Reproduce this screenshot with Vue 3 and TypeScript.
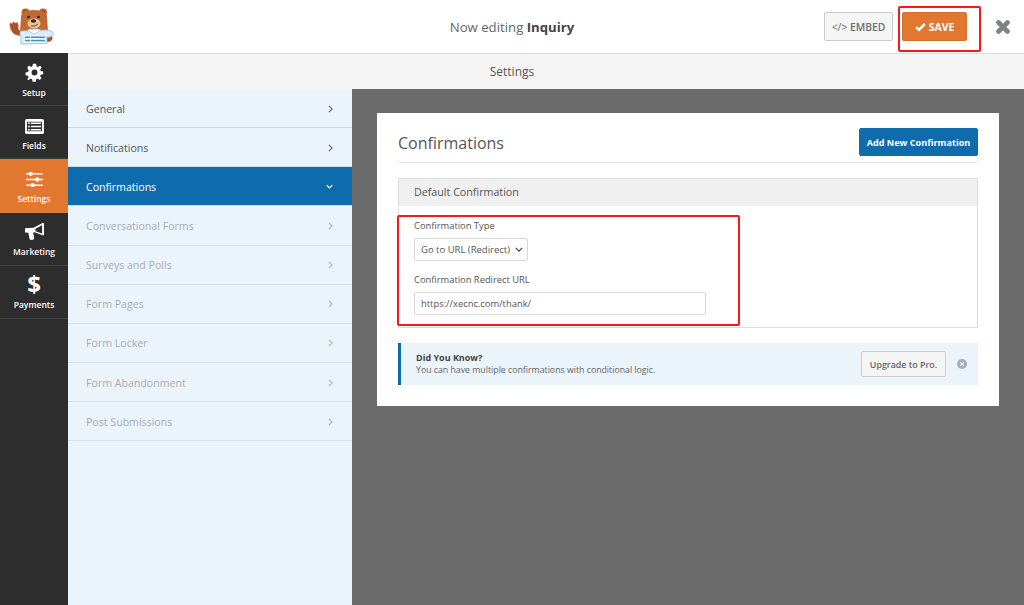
<script setup lang="ts">
const navItems = [
  { label: 'Setup', icon: 'gear', active: false },
  { label: 'Fields', icon: 'fields', active: false },
  { label: 'Settings', icon: 'sliders', active: true },
  { label: 'Marketing', icon: 'megaphone', active: false },
  { label: 'Payments', icon: 'dollar', active: false },
]
const menu = [
  { label: 'General', state: 'normal' },
  { label: 'Notifications', state: 'normal' },
  { label: 'Confirmations', state: 'active' },
  { label: 'Conversational Forms', state: 'muted' },
  { label: 'Surveys and Polls', state: 'muted' },
  { label: 'Form Pages', state: 'muted' },
  { label: 'Form Locker', state: 'muted' },
  { label: 'Form Abandonment', state: 'muted' },
  { label: 'Post Submissions', state: 'muted' },
]
</script>

<template>
  <div class="app">
    <header class="topbar">
      <svg class="logo" viewBox="0 0 60 50" width="60" height="50">
        <circle cx="25.500" cy="12.500" r="4" fill="#b5622f" />
        <circle cx="43" cy="12.500" r="4" fill="#b5622f" />
        <circle cx="25.500" cy="12.500" r="2" fill="#8a4522" />
        <circle cx="43" cy="12.500" r="2" fill="#8a4522" />
        <path d="M47 32 Q52 33 52.500 38 Q52 42 47 42Z" fill="#a8542a" />
        <path d="M9.500 25 L10 22.500 L12 23.500 L13.500 21.500 L15 23 L17.500 22 L18.500 25 L18.500 29 L22 33 L20 36 L14.500 34.500 Q10 31 9.500 25Z" fill="#a8512a" stroke="#f0c9a5" stroke-width="0.500" />
        <path d="M21 17 Q21 10 34 10 Q47 10 47 17 L48 31 L20 31Z" fill="#c06a33" />
        <ellipse cx="34" cy="23.500" rx="6.500" ry="5" fill="#ecc49c" />
        <ellipse cx="33.500" cy="21" rx="2.800" ry="1.800" fill="#3b2416" />
        <circle cx="28.500" cy="17" r="1.300" fill="#2b1a10" />
        <circle cx="38.500" cy="17" r="1.300" fill="#2b1a10" />
        <path d="M31 26 Q35 27 38 24" stroke="#5b3218" stroke-width="0.900" fill="none" />
        <path d="M20.500 31 L47 30 Q53 31 53.500 33 Q52 38 47 37 L47 43.500 L21 44 L21 37 Q19 33 20.500 31Z" fill="#dcedf9" stroke="#8dbbdc" stroke-width="0.800" />
        <path d="M27 30.500 L34 34 L41 30.500 L38 29 L30 29Z" fill="#ffffff" stroke="#8dbbdc" stroke-width="0.600" />
        <rect x="24" y="35.500" width="22" height="7" fill="#f4f9fd" />
        <rect x="25" y="36.500" width="5" height="1.500" fill="#3d8fd0" />
        <rect x="31" y="36.500" width="14" height="1.500" fill="#3d8fd0" />
        <rect x="25" y="39.800" width="5" height="1.500" fill="#3d8fd0" />
        <rect x="31" y="39.800" width="14" height="1.500" fill="#3d8fd0" />
      </svg>
      <div class="title">Now editing <strong>Inquiry</strong></div>
      <div class="actions">
        <button class="embed" type="button"><span class="code">&lt;/&gt;</span> EMBED</button>
        <button class="save" type="button">
          <svg viewBox="0 0 14 12" width="11" height="10"><path d="M1.500 6.200 L5 9.600 L12.500 2.200" fill="none" stroke="#fff" stroke-width="3.200" /></svg>
          SAVE
        </button>
        <svg class="close" viewBox="0 0 14 14" width="14" height="14"><path d="M2.500 2.500 L11.500 11.500 M11.500 2.500 L2.500 11.500" stroke="#7d8285" stroke-width="4.600" stroke-linecap="round" /></svg>
      </div>
    </header>

    <div class="body">
      <nav class="rail">
        <div v-for="item in navItems" :key="item.label" class="rail-item" :class="{ active: item.active }">
          <svg v-if="item.icon === 'gear'" viewBox="0 0 24 24" width="19" height="19">
            <path fill="#fff" fill-rule="evenodd" d="M10 1h4l.6 3.100 1.800.8L19 3.100 21 5.900l-1.900 2.400.7 1.800 3.200.6v3.400l-3.200.7-.7 1.800 1.900 2.500-2.400 2.400-2.600-1.800-1.800.7-.6 3.200h-4l-.6-3.200-1.800-.7-2.600 1.800L2.700 20.400l1.900-2.500-.7-1.800-3.200-.7v-3.400l3.200-.6.7-1.800L2.900 5.900 5 3.100l2.600 1.800 1.800-.8zM12 8.300a3.700 3.700 0 1 0 0 7.400 3.700 3.700 0 0 0 0-7.400z" />
          </svg>
          <svg v-else-if="item.icon === 'fields'" viewBox="0 0 22 18" width="21" height="17">
            <rect x="1" y="1" width="20" height="16" rx="2" fill="#fff" />
            <rect x="3" y="4" width="16" height="10" fill="#2d2d2d" />
            <path d="M4 5.500h2M7 5.500h11M4 9h2M7 9h11M4 12.500h2M7 12.500h11" stroke="#fff" stroke-width="1.600" />
          </svg>
          <svg v-else-if="item.icon === 'sliders'" viewBox="0 0 20 18" width="19" height="17">
            <path d="M1 3h18M1 9h18M1 15h18" stroke="#fff" stroke-width="1.500" />
            <rect x="4" y="1" width="4" height="4" rx="1" fill="#fff" />
            <rect x="11" y="7" width="4" height="4" rx="1" fill="#fff" />
            <rect x="6" y="13" width="4" height="4" rx="1" fill="#fff" />
          </svg>
          <svg v-else-if="item.icon === 'megaphone'" viewBox="0 0 22 20" width="21" height="19">
            <path fill="#fff" fill-rule="evenodd" d="M1 6.500 L10 6 L19.500 1 L21 1 L21 14 L19.500 14 L11 10.800 L9.500 11 L10.800 17 L10 18.500 L7 19 L5.800 18 L4.500 11.200 L1 11 Z M12 7 L12 9.700 L19 12 L19 3.500 Z" />
          </svg>
          <span v-else class="dollar">$</span>
          <span class="rail-label">{{ item.label }}</span>
        </div>
      </nav>

      <div class="main">
        <div class="subbar">Settings</div>
        <div class="columns">
          <aside class="menu">
            <div
              v-for="entry in menu"
              :key="entry.label"
              class="menu-item"
              :class="entry.state"
            >
              <span>{{ entry.label }}</span>
              <svg v-if="entry.state === 'active'" viewBox="0 0 10 6" width="7" height="5"><path d="M1 1 L5 5 L9 1" fill="none" stroke="#fff" stroke-width="1.600" /></svg>
              <svg v-else viewBox="0 0 6 10" width="5" height="8"><path d="M1 1 L5 5 L1 9" fill="none" stroke="currentColor" stroke-width="1.300" /></svg>
            </div>
          </aside>

          <section class="canvas">
            <div class="card">
              <div class="card-head">
                <h2>Confirmations</h2>
                <button class="add" type="button">Add New Confirmation</button>
              </div>
              <div class="panel">
                <div class="panel-head">Default Confirmation</div>
                <div class="panel-body">
                  <label class="lbl">Confirmation Type</label>
                  <div class="select">
                    <span>Go to URL (Redirect)</span>
                    <svg viewBox="0 0 10 6" width="8" height="5"><path d="M1 1 L5 5 L9 1" fill="none" stroke="#444" stroke-width="1.500" /></svg>
                  </div>
                  <label class="lbl second">Confirmation Redirect URL</label>
                  <div class="input">https://xecnc.com/thank/</div>
                </div>
              </div>
              <div class="notice">
                <div class="notice-text">
                  <strong>Did You Know?</strong>
                  <span>You can have multiple confirmations with conditional logic.</span>
                </div>
                <button class="upgrade" type="button">Upgrade to Pro.</button>
                <svg class="dismiss" viewBox="0 0 12 12" width="10" height="10">
                  <circle cx="6" cy="6" r="6" fill="#a6acb2" />
                  <path d="M3.800 3.800 L8.200 8.200 M8.200 3.800 L3.800 8.200" stroke="#ebf3fb" stroke-width="1.500" />
                </svg>
              </div>
            </div>
          </section>
        </div>
      </div>
    </div>

    <div class="mark mark-save"></div>
    <div class="mark mark-form"></div>
  </div>
</template>

<style>
html, body { margin: 0; padding: 0; }
</style>

<style scoped>
.app {
  position: relative;
  width: 1024px;
  height: 605px;
  overflow: hidden;
  display: flex;
  flex-direction: column;
  font-family: "Open Sans", "Liberation Sans", sans-serif;
  color: #444;
  background: #fff;
}
.topbar {
  position: relative;
  height: 54px;
  box-sizing: border-box;
  flex: none;
  border-bottom: 1px solid #ddd;
  display: flex;
  align-items: center;
  justify-content: center;
  background: #fff;
}
.logo { position: absolute; left: 0; top: 0; }
.title { font-size: 13.200px; color: #666; }
.title strong { font-weight: 700; color: #444; }
.actions {
  position: absolute;
  right: 14px;
  top: 12px;
  display: flex;
  align-items: center;
}
.embed {
  width: 69px;
  height: 29px;
  margin-right: 9px;
  padding: 0;
  border: 1px solid #ccc;
  border-radius: 2px;
  background: #f5f5f5;
  color: #6a6f73;
  font: 600 10.300px "Open Sans", sans-serif;
}
.embed .code { font-weight: 400; }
.save {
  width: 65px;
  height: 29px;
  margin-right: 29px;
  padding: 0;
  border: 1px solid #d0702a;
  border-radius: 2px;
  background: #e27730;
  color: #fff;
  font: 700 10.500px "Open Sans", sans-serif;
  display: flex;
  align-items: center;
  justify-content: center;
  gap: 3px;
}
.close { display: block; }
.body { flex: 1; display: flex; min-height: 0; }
.rail { width: 68px; flex: none; background: #2d2d2d; margin-top: -1px; position: relative; }
.rail-item {
  height: 53.200px;
  box-sizing: border-box;
  border-bottom: 1px solid #3f3f3f;
  display: flex;
  flex-direction: column;
  align-items: center;
  justify-content: flex-end;
  padding-bottom: 7.500px;
  color: #fff;
  gap: 5px;
}
.rail-item.active { background: #e27730; border-bottom-color: #e27730; }
.rail-label { font-size: 8.500px; font-weight: 600; line-height: 11px; }
.dollar { font: 700 24px/22px "Open Sans", sans-serif; height: 22px; position: relative; top: 1px; }
.main { flex: 1; display: flex; flex-direction: column; min-width: 0; }
.subbar {
  height: 35px;
  flex: none;
  box-sizing: border-box;
  padding-right: 68px;
  background: #f5f5f5;
  display: flex;
  align-items: center;
  justify-content: center;
  font-size: 12px;
  color: #555;
}
.columns { flex: 1; display: flex; min-height: 0; }
.menu { width: 284px; flex: none; background: #ebf3fb; }
.menu-item {
  height: 39.150px;
  box-sizing: border-box;
  border-bottom: 1px solid #cfd9e3;
  display: flex;
  align-items: center;
  justify-content: space-between;
  padding: 1px 19px 0 18px;
  font-size: 10.600px;
  color: #555;
}
.menu-item.active { background: #0e6cad; color: #fff; border-bottom-color: #cfd9e3; }
.menu-item.muted { color: #a9adb1; border-bottom-color: #d8e1ea; }
.canvas {
  flex: 1;
  background: #6b6b6b;
  padding: 24px 25px 0;
}
.card {
  height: 293px;
  box-sizing: border-box;
  background: #fff;
  padding: 15px 21px 0;
}
.card-head {
  height: 35px;
  box-sizing: border-box;
  border-bottom: 1px solid #e4e4e4;
  display: flex;
  justify-content: space-between;
  align-items: flex-start;
}
.card-head h2 {
  margin: 3px 0 0;
  font-size: 16px;
  font-weight: 400;
  color: #555;
  line-height: 24px;
}
.add {
  width: 119px;
  height: 28px;
  padding: 0;
  border: 1px solid #0e6cad;
  border-radius: 2px;
  background: #0e6cad;
  color: #fff;
  font: 700 9.100px "Open Sans", sans-serif;
}
.panel {
  margin-top: 15px;
  height: 150px;
  box-sizing: border-box;
  border: 1px solid #dcdcdc;
}
.panel-head {
  height: 27px;
  box-sizing: border-box;
  background: #f0f0f0;
  padding-left: 15px;
  font-size: 10.700px;
  line-height: 26px;
  color: #555;
}
.panel-body { padding: 14px 15px 0; }
.lbl { display: block; font-size: 9.350px; line-height: 12px; color: #555; }
.lbl.second { margin-top: 13px; }
.select {
  margin-top: 6px;
  width: 114px;
  height: 23px;
  box-sizing: border-box;
  border: 1px solid #d8d8d8;
  border-radius: 2px;
  display: flex;
  align-items: center;
  justify-content: space-between;
  padding: 0 4px 0 6px;
  font-size: 9.500px;
  color: #555;
  background: #fff;
}
.input {
  margin-top: 6px;
  width: 292px;
  height: 23px;
  box-sizing: border-box;
  border: 1px solid #d8d8d8;
  border-radius: 2px;
  padding-left: 6px;
  font-size: 9.400px;
  line-height: 21px;
  color: #555;
}
.notice {
  margin-top: 15px;
  height: 42px;
  box-sizing: border-box;
  background: #ebf3fb;
  border-left: 3px solid #0e6cad;
  display: flex;
  align-items: center;
  padding-left: 15px;
}
.notice-text {
  flex: 1;
  display: flex;
  flex-direction: column;
  font-size: 8.750px;
  line-height: 13px;
  color: #666;
}
.notice-text strong { color: #444; font-weight: 700; font-size: 9px; }
.upgrade {
  width: 85px;
  height: 26px;
  padding: 0;
  border: 1px solid #ccc;
  border-radius: 2px;
  background: #f5f5f5;
  color: #666;
  font: 600 8.900px "Open Sans", sans-serif;
  margin-right: 11px;
}
.dismiss { margin-right: 11px; flex: none; }
.mark {
  position: absolute;
  box-sizing: border-box;
  border: 2px solid #f5191c;
  border-radius: 2px;
  pointer-events: none;
}
.mark-save { left: 898px; top: 6px; width: 83px; height: 46px; }
.mark-form { left: 397px; top: 215px; width: 343px; height: 111px; }
</style>
